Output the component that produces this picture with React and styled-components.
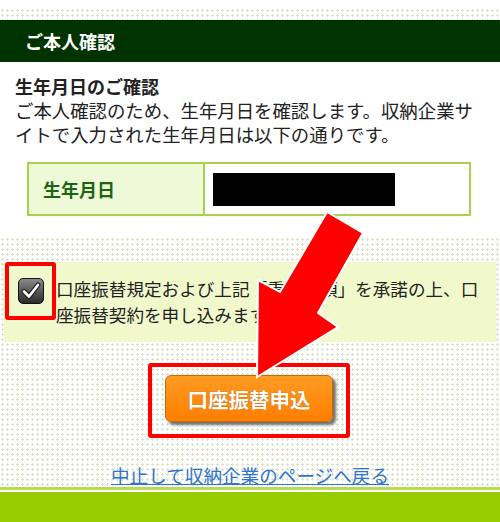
import React from 'react'
import styled, { createGlobalStyle } from 'styled-components'

const GlobalStyle = createGlobalStyle`
  html, body {
    margin: 0;
    padding: 0;
    background: #fff;
  }
  body {
    font-family: "Noto Sans CJK JP", "Noto Sans", sans-serif;
    color: #222;
  }
`

const dots = `
  background-color: #fff;
  background-image: radial-gradient(#dde4c6 1px, transparent 1.3px);
  background-size: 5px 5px;
`

export default function App() {
  return (
    <Page>
      <GlobalStyle />
      <TopDots />
      <Header>ご本人確認</Header>

      <Section>
        <Title>生年月日のご確認</Title>
        <Text>
          ご本人確認のため、生年月日を確認します。収納企業サイトで入力された生年月日は以下の通りです。
        </Text>
        <InfoTable>
          <Label>生年月日</Label>
          <Value>
            <Masked />
          </Value>
        </InfoTable>
      </Section>

      <DotArea>
        <AgreeBox>
          <CheckFrame>
            <CheckBox>
              <svg width="20" height="18" viewBox="0 0 20 18">
                <path d="M3 9.5 L8 14.5 L17 3" fill="none" stroke="#222" strokeWidth="5" strokeLinecap="round" strokeLinejoin="round" />
                <path d="M3 9.5 L8 14.5 L17 3" fill="none" stroke="#fff" strokeWidth="2.6" strokeLinecap="round" strokeLinejoin="round" />
              </svg>
            </CheckBox>
          </CheckFrame>
          <AgreeText>
            口座振替規定および上記「重要事項」を承諾の上、口座振替契約を申し込みます。
          </AgreeText>
        </AgreeBox>

        <ButtonRow>
          <ButtonFrame>
            <SubmitButton>口座振替申込</SubmitButton>
          </ButtonFrame>
        </ButtonRow>

        <BackLink href="#">中止して収納企業のページへ戻る</BackLink>
      </DotArea>

      <Footer />

      <Arrow viewBox="0 0 500 522">
        <polygon
          points="327,212 363,233 318,313 338,327 257,377 258,280 280,292"
          fill="#ff0000"
          stroke="#fff"
          strokeWidth="2"
          strokeLinejoin="miter"
        />
      </Arrow>
    </Page>
  )
}

// Styles
const Page = styled.div`
  position: relative;
  width: 500px;
  height: 522px;
  overflow: hidden;
  display: flex;
  flex-direction: column;
`

const TopDots = styled.div`
  height: 12px;
  margin-top: 8px;
  ${dots}
`

const Header = styled.div`
  height: 42px;
  background: #003300;
  color: #fff;
  font-size: 18px;
  font-weight: bold;
  display: flex;
  align-items: center;
  padding-left: 25px;
`

const Section = styled.div`
  padding: 12px 15px 21px;
  background: #fff;
`

const Title = styled.div`
  font-size: 18px;
  font-weight: bold;
  line-height: 24px;
`

const Text = styled.div`
  font-size: 18.4px;
  line-height: 24px;
`

const InfoTable = styled.div`
  margin: 16px 14px 0 12px;
  height: 54px;
  box-sizing: border-box;
  border: 2px solid #a8d14c;
  display: flex;
`

const Label = styled.div`
  width: 176px;
  background: #eef9d8;
  border-right: 2px solid #a8d14c;
  color: #1d6412;
  font-size: 18px;
  font-weight: bold;
  display: flex;
  align-items: center;
  padding-left: 14px;
  box-sizing: border-box;
`

const Value = styled.div`
  flex: 1;
  display: flex;
  align-items: center;
  padding-left: 8px;
`

const Masked = styled.div`
  width: 182px;
  height: 33px;
  background: #000;
`

const DotArea = styled.div`
  flex: 1;
  ${dots}
  padding-top: 25px;
  display: flex;
  flex-direction: column;
`

const AgreeBox = styled.div`
  margin: 0 4px;
  height: 80px;
  box-sizing: border-box;
  background: #f1f9cc;
  display: flex;
  align-items: flex-start;
`

const CheckFrame = styled.div`
  width: 51px;
  height: 58px;
  box-sizing: border-box;
  border: 4px solid #ff0000;
  border-radius: 3px;
  display: flex;
  align-items: center;
  justify-content: center;
  margin-left: 1px;
  flex-shrink: 0;
`

const CheckBox = styled.div`
  width: 26px;
  height: 26px;
  box-sizing: border-box;
  border-radius: 5px;
  border: 1px solid #111;
  background: linear-gradient(#8a8a8a, #2a2a2a);
  display: flex;
  align-items: center;
  justify-content: center;
`

const AgreeText = styled.div`
  padding-top: 14px;
  font-size: 17.6px;
  line-height: 26px;
  padding-right: 14px;
`

const ButtonRow = styled.div`
  margin-top: 21px;
  display: flex;
  justify-content: center;
`

const ButtonFrame = styled.div`
  width: 202px;
  height: 75px;
  box-sizing: border-box;
  border: 4px solid #ff0000;
  border-radius: 3px;
  padding: 8px 13px 0;
  margin-left: -2px;
`

const SubmitButton = styled.button`
  width: 168px;
  height: 47px;
  border: 1px solid #c96a00;
  border-radius: 6px;
  background: linear-gradient(#ff9c22, #ff7e00);
  box-shadow: 3px 3px 3px #6f6f6f;
  color: #fff;
  font-family: inherit;
  font-size: 20.5px;
  font-weight: bold;
  text-shadow: 0 0 1px #a04d00;
  padding: 0;
  cursor: pointer;
`

const BackLink = styled.a`
  margin-top: 25px;
  align-self: center;
  font-size: 18.6px;
  line-height: 24px;
  color: #2f74d0;
  text-decoration: underline;
`

const Footer = styled.div`
  height: 30px;
  background: #99cc00;
  border-top: 2px solid #fff;
  box-shadow: 0 -3px 0 #b7dc52;
  margin-top: 3px;
`

const Arrow = styled.svg`
  position: absolute;
  left: 0;
  top: 0;
  width: 500px;
  height: 522px;
  pointer-events: none;
`
